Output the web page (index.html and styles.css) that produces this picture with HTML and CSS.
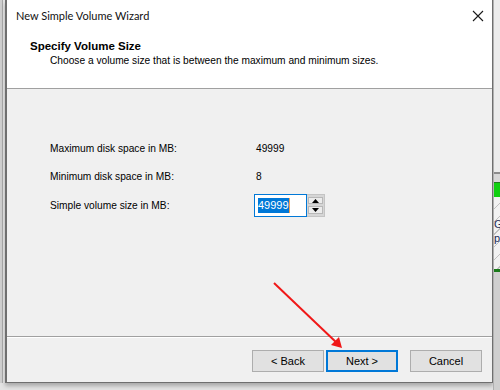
FILE: index.html
```html
<!DOCTYPE html>
<html>
<head lang="en">
    <meta charset="UTF-8">
    <title>New Simple Volume Wizard</title>
    <link rel="stylesheet" href="styles.css">
</head>
<body>
<div id="desk">
    <div class="edge-left"></div>
    <div id="wizard">
        <div class="header">
            <div class="titlebar">
                <span class="caption">New Simple Volume Wizard</span>
                <span class="close">
                    <svg width="12" height="12" viewBox="0 0 12 12"><path d="M1 1L11 11M11 1L1 11" stroke="#1a1a1a" stroke-width="1.1"/></svg>
                </span>
            </div>
            <div class="heading">Specify Volume Size</div>
            <div class="subheading">Choose a volume size that is between the maximum and minimum sizes.</div>
        </div>
        <div class="body">
            <div class="row">
                <span class="label">Maximum disk space in MB:</span>
                <span class="value">49999</span>
            </div>
            <div class="row">
                <span class="label">Minimum disk space in MB:</span>
                <span class="value">8</span>
            </div>
            <div class="row">
                <span class="label">Simple volume size in MB:</span>
                <div class="spin">
                    <div class="spin-input"><span class="sel">49999</span></div>
                    <div class="spin-btns">
                        <span class="spin-btn"><svg width="7" height="4" viewBox="0 0 7 4"><path d="M3.5 0L7 4H0z" fill="#000"/></svg></span>
                        <span class="spin-btn"><svg width="7" height="4" viewBox="0 0 7 4"><path d="M0 0H7L3.5 4z" fill="#000"/></svg></span>
                    </div>
                </div>
            </div>
        </div>
        <div class="footer">
            <span class="btn">&lt; Back</span>
            <span class="btn default">Next &gt;</span>
            <span class="btn cancel">Cancel</span>
        </div>
    </div>
    <div class="edge-right">
        <div class="er-top"></div>
        <div class="er-bar"></div>
        <div class="er-green"></div>
        <div class="er-hatch"><span class="g">G</span><span class="pa">pa</span></div>
        <div class="er-line"></div>
        <div class="er-rest"></div>
    </div>
    <svg class="arrow" width="500" height="390" viewBox="0 0 500 390">
        <path d="M274 283L338 344" stroke="#f01818" stroke-width="2" fill="none"/>
        <path d="M342 348L331 345L339 337z" fill="#f01818"/>
    </svg>
</div>
</body>
</html>
```

FILE: styles.css
```css
* {
    margin: 0;
    padding: 0;
    box-sizing: border-box;
}

body {
    width: 500px;
    height: 390px;
    overflow: hidden;
    background-color: #e3e3e3;
    font-family: "Liberation Sans", Arial, sans-serif;
    font-size: 10.2px;
    color: #000;
}

#desk {
    position: relative;
    display: flex;
    width: 500px;
    height: 390px;
}

.edge-left {
    width: 5px;
    height: 383px;
    background: linear-gradient(to right, #cfcfcf 0, #cfcfcf 2px, #a9a9a9 2px, #a9a9a9 3px, #e6e6e6 3px);
}

#wizard {
    display: flex;
    flex-direction: column;
    width: 488px;
    height: 383px;
    border: 1px solid #6f6f6f;
    border-top: none;
    border-left-width: 2px;
    background-color: #f0f0f0;
    box-shadow: 0 3px 4px rgba(0, 0, 0, 0.25);
}

.header {
    height: 89px;
    background-color: #fff;
    border-bottom: 1px solid #a0a0a0;
}

.titlebar {
    display: flex;
    justify-content: space-between;
    align-items: center;
    height: 31px;
    padding: 0 8px 0 9px;
}

.caption {
    font-family: Lato, sans-serif;
    font-size: 11px;
    color: #111;
}

.close {
    display: flex;
    width: 12px;
    height: 12px;
}

.heading {
    margin: 9px 0 0 23px;
    font-weight: bold;
    font-size: 11.5px;
}

.subheading {
    margin: 3px 0 0 43px;
}

.body {
    flex: 1;
    padding: 45px 0 0 43px;
    border-bottom: 1px solid #a0a0a0;
}

.row {
    display: flex;
    align-items: center;
    height: 28.5px;
}

.label {
    width: 206px;
}

.spin {
    display: flex;
    align-items: stretch;
    height: 23px;
    margin-left: -2px;
}

.spin-input {
    display: flex;
    align-items: center;
    width: 53px;
    padding-left: 3px;
    background-color: #fff;
    border: 1px solid #0078d7;
}

.sel {
    background-color: #0078d7;
    color: #fff;
    font-size: 11px;
    line-height: 15px;
    border-right: 1px solid #f0a050;
}

.spin-btns {
    display: flex;
    flex-direction: column;
    gap: 2px;
    width: 18px;
    padding: 2px 1px;
    background-color: #d6d6d6;
    border: 1px solid #c4c4c4;
    border-left: none;
}

.spin-btn {
    display: flex;
    flex: 1;
    align-items: center;
    justify-content: center;
    background-color: #ececec;
    border: 1px solid #b8b8b8;
}

.footer {
    display: flex;
    align-items: center;
    height: 45px;
    padding: 2px 0 0 245px;
    border-top: 1px solid #fff;
}

.btn {
    display: flex;
    align-items: center;
    justify-content: center;
    width: 72px;
    height: 22px;
    margin-right: 2px;
    background-color: #e1e1e1;
    border: 1px solid #adadad;
    font-size: 11px;
}

.btn.default {
    border: 2px solid #0078d7;
}

.btn.cancel {
    margin-left: 10px;
}

.edge-right {
    display: flex;
    flex-direction: column;
    width: 7px;
    height: 390px;
    border-left: 1px solid #b0b0b0;
    background-color: #ececec;
}

.er-top {
    height: 172px;
}

.er-bar {
    height: 10px;
    border-top: 2px solid #8c8c8c;
    background-color: #d8d8d8;
}

.er-green {
    height: 15px;
    border-top: 1px solid #1f7a1f;
    background-color: #10d010;
}

.er-hatch {
    display: flex;
    flex-direction: column;
    gap: 1px;
    height: 72px;
    overflow: hidden;
    padding-top: 21px;
    background: repeating-linear-gradient(135deg, #f2f2f2 0, #f2f2f2 8px, #c0c0c0 8px, #c0c0c0 9px);
    font-size: 11px;
    line-height: 13px;
    color: #1d2a55;
}

.er-line {
    height: 3px;
    background-color: #1a7a1a;
}

.er-rest {
    flex: 1;
    background-color: #cfcfcf;
}

.arrow {
    position: absolute;
    left: 0;
    top: 0;
    pointer-events: none;
}
```
